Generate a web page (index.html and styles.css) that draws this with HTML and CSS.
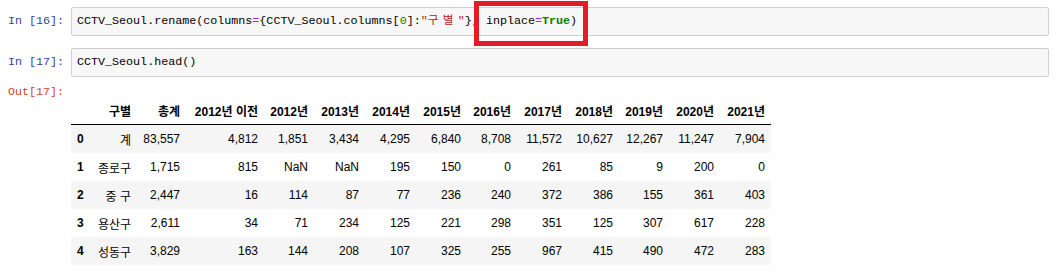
FILE: index.html
```html
<!DOCTYPE html>
<html lang="ko">
<head>
<meta charset="UTF-8">
<title>CCTV_Seoul</title>
<link rel="stylesheet" href="styles.css">
</head>
<body>
<div class="notebook">
  <div class="cell">
    <div class="prompt in">In&nbsp;[16]:</div>
    <div class="input">
      <pre class="code">CCTV_Seoul.rename(columns<span class="op">=</span>{CCTV_Seoul.columns[<span class="num">0</span>]:<span class="str">"<span class="hangul">구별</span>"</span>}, <span class="mark">inplace<span class="op">=</span><span class="kw">True</span>)</span></pre>
    </div>
  </div>

  <div class="cell second">
    <div class="prompt in">In&nbsp;[17]:</div>
    <div class="input">
      <pre class="code">CCTV_Seoul.head()</pre>
    </div>
  </div>

  <div class="cell output">
    <div class="prompt out">Out[17]:</div>
    <div class="output-area">
      <table class="dataframe">
        <colgroup>
          <col class="c-idx"><col class="c-gu"><col class="c-total"><col class="c-before">
          <col class="c-year"><col class="c-year2"><col class="c-year2"><col class="c-year2">
          <col class="c-year"><col class="c-year2"><col class="c-year2"><col class="c-year">
          <col class="c-year2"><col class="c-year2">
        </colgroup>
        <thead>
          <tr>
            <th></th><th>구별</th><th>총계</th><th>2012년 이전</th><th>2012년</th><th>2013년</th><th>2014년</th>
            <th>2015년</th><th>2016년</th><th>2017년</th><th>2018년</th><th>2019년</th><th>2020년</th><th>2021년</th>
          </tr>
        </thead>
        <tbody>
          <tr><th>0</th><td>계</td><td>83,557</td><td>4,812</td><td>1,851</td><td>3,434</td><td>4,295</td><td>6,840</td><td>8,708</td><td>11,572</td><td>10,627</td><td>12,267</td><td>11,247</td><td>7,904</td></tr>
          <tr><th>1</th><td>종로구</td><td>1,715</td><td>815</td><td>NaN</td><td>NaN</td><td>195</td><td>150</td><td>0</td><td>261</td><td>85</td><td>9</td><td>200</td><td>0</td></tr>
          <tr><th>2</th><td>중 구</td><td>2,447</td><td>16</td><td>114</td><td>87</td><td>77</td><td>236</td><td>240</td><td>372</td><td>386</td><td>155</td><td>361</td><td>403</td></tr>
          <tr><th>3</th><td>용산구</td><td>2,611</td><td>34</td><td>71</td><td>234</td><td>125</td><td>221</td><td>298</td><td>351</td><td>125</td><td>307</td><td>617</td><td>228</td></tr>
          <tr><th>4</th><td>성동구</td><td>3,829</td><td>163</td><td>144</td><td>208</td><td>107</td><td>325</td><td>255</td><td>967</td><td>415</td><td>490</td><td>472</td><td>283</td></tr>
        </tbody>
      </table>
    </div>
  </div>
</div>
</body>
</html>
```

FILE: styles.css
```css
body {
  margin: 0;
  padding: 0;
  background: #fff;
  font-family: "Liberation Sans", "Noto Sans CJK KR", sans-serif;
}

.notebook {
  width: 1062px;
  padding-top: 7px;
}

.cell {
  display: flex;
  align-items: flex-start;
}

.cell.second {
  margin-top: 12px;
}

.cell.output {
  margin-top: 6px;
}

/* prompts on the left */
.prompt {
  width: 64px;
  padding-right: 7px;
  text-align: right;
  font-family: "Liberation Mono", "Noto Sans CJK KR", monospace;
  font-size: 11.7px;
  line-height: 29px;
  flex-shrink: 0;
}
.prompt.in {
  color: #303f9f;
}
.prompt.out {
  color: #d84315;
  line-height: 18px;
}

.input {
  width: 978px;
  background: #f7f7f7;
  border: 1px solid #cfcfcf;
  border-radius: 2px;
  padding: 6px 5px;
  box-sizing: border-box;
}

.code {
  margin: 0;
  font-family: "Liberation Mono", "Noto Sans CJK KR", monospace;
  font-size: 11.7px;
  line-height: 15px;
  color: #000;
  white-space: pre;
}
.code .op { color: #aa22ff; }
.code .num { color: #008800; }
.code .str { color: #ba2121; }
.code .kw { color: #008000; font-weight: bold; }
.code .hangul { letter-spacing: 4.3px; }

/* the red highlight box */
.mark {
  position: relative;
}
.mark::after {
  content: "";
  position: absolute;
  left: -12px;
  right: -11px;
  top: -13px;
  bottom: -18px;
  border: 5px solid #e31c25;
}

.output-area {
  padding-top: 14px;
}

/* dataframe */
.dataframe {
  border-collapse: collapse;
  table-layout: fixed;
  width: 700px;
  font-size: 12px;
  color: #000;
}
.c-idx { width: 20px; }
.c-gu { width: 46px; }
.c-total { width: 49px; }
.c-before { width: 78px; }
.c-year { width: 50px; }
.c-year2 { width: 51px; }

.dataframe th,
.dataframe td {
  padding: 0 6px;
  height: 28px;
  text-align: right;
  vertical-align: middle;
  white-space: nowrap;
  border: none;
}
.dataframe thead th {
  height: 27px;
  font-weight: bold;
  border-bottom: 1px solid #000;
}
.dataframe tbody th {
  text-align: left;
  font-weight: bold;
}
.dataframe tbody tr:nth-child(odd) {
  background: #f5f5f5;
}
```
